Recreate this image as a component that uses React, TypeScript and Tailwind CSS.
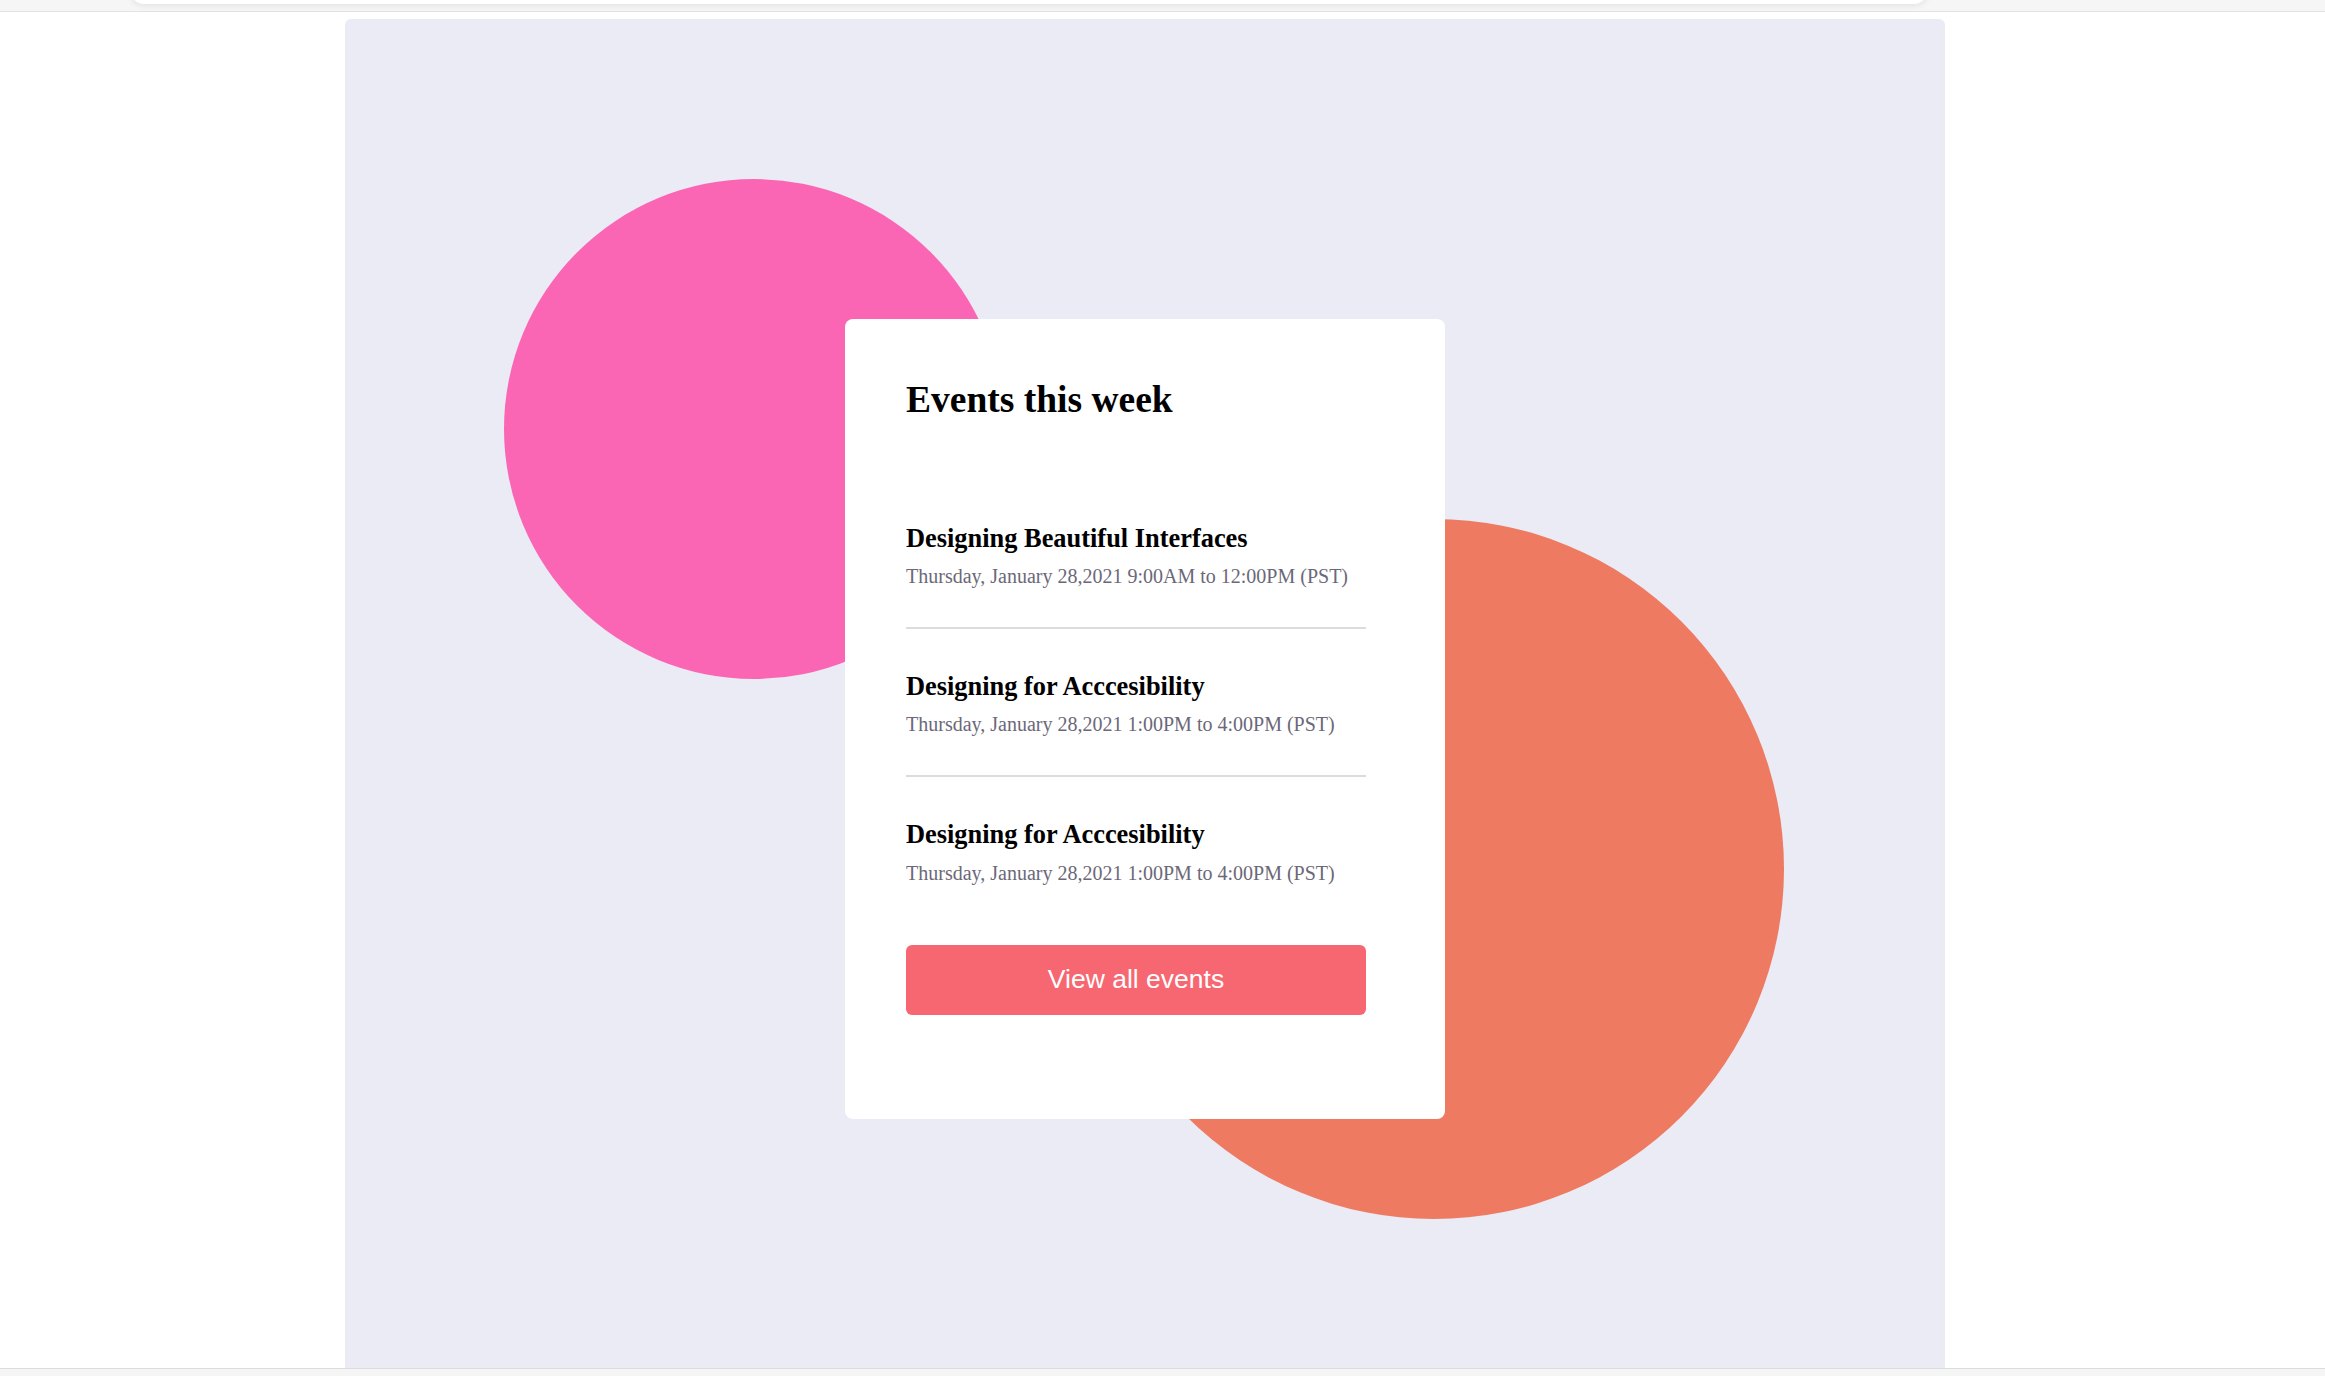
const events = [
  { title: 'Designing Beautiful Interfaces', time: 'Thursday, January 28,2021 9:00AM to 12:00PM (PST)' },
  { title: 'Designing for Acccesibility', time: 'Thursday, January 28,2021 1:00PM to 4:00PM (PST)' },
  { title: 'Designing for Acccesibility', time: 'Thursday, January 28,2021 1:00PM to 4:00PM (PST)' },
];

export default function App() {
  return (
    <div className="w-[2325px] h-[1376px] flex flex-col bg-white overflow-hidden">
      {/* browser chrome strip */}
      <div className="h-[12px] shrink-0 bg-[#f6f6f6] border-b border-[#e2e2e2] relative">
        <div className="absolute left-[130px] right-[397px] -top-[20px] h-[24px] bg-white rounded-b-[14px] shadow-[0_2px_6px_rgba(0,0,0,0.08)]" />
      </div>

      <div className="flex-1 flex pt-[7px] pl-[345px]">
        <div className="w-[1600px] h-full bg-[#ebebf5] rounded-t-[6px] flex justify-center pt-[300px]">
          <div className="relative w-[600px] h-[800px]">
            {/* decorative blobs */}
            <div className="absolute left-[-341px] top-[-140px] w-[500px] h-[500px] rounded-full bg-[#fa66b4]" />
            <div className="absolute left-[239px] top-[200px] w-[700px] h-[700px] rounded-full bg-[#ee7a62]" />

            <div className="relative z-10 h-full bg-white rounded-[8px] pt-[62px] pl-[61px] pr-[79px] font-['Liberation_Serif',serif]">
              <h2 className="text-[37.5px] leading-none font-bold text-black">Events this week</h2>

              <div className="mt-[106px] flex flex-col">
                {events.map((ev, i) => (
                  <div key={i} className="flex flex-col">
                    {i > 0 && <div className="h-[2px] bg-[#dadddd] mt-[41px] mb-[44px]" />}
                    <h3 className="text-[26.4px] leading-none font-bold text-black">{ev.title}</h3>
                    <p className="mt-[15px] text-[20px] leading-none text-[#6b6878]">{ev.time}</p>
                  </div>
                ))}
              </div>

              <button className="mt-[62px] w-full h-[70px] rounded-[6px] bg-[#f76771] text-white text-[26.5px] font-['Liberation_Sans',Arial,sans-serif]">
                View all events
              </button>
            </div>
          </div>
        </div>
      </div>

      <div className="h-[8px] shrink-0 bg-[#f5f5f5] border-t border-[#dcdcdc]" />
    </div>
  );
}
